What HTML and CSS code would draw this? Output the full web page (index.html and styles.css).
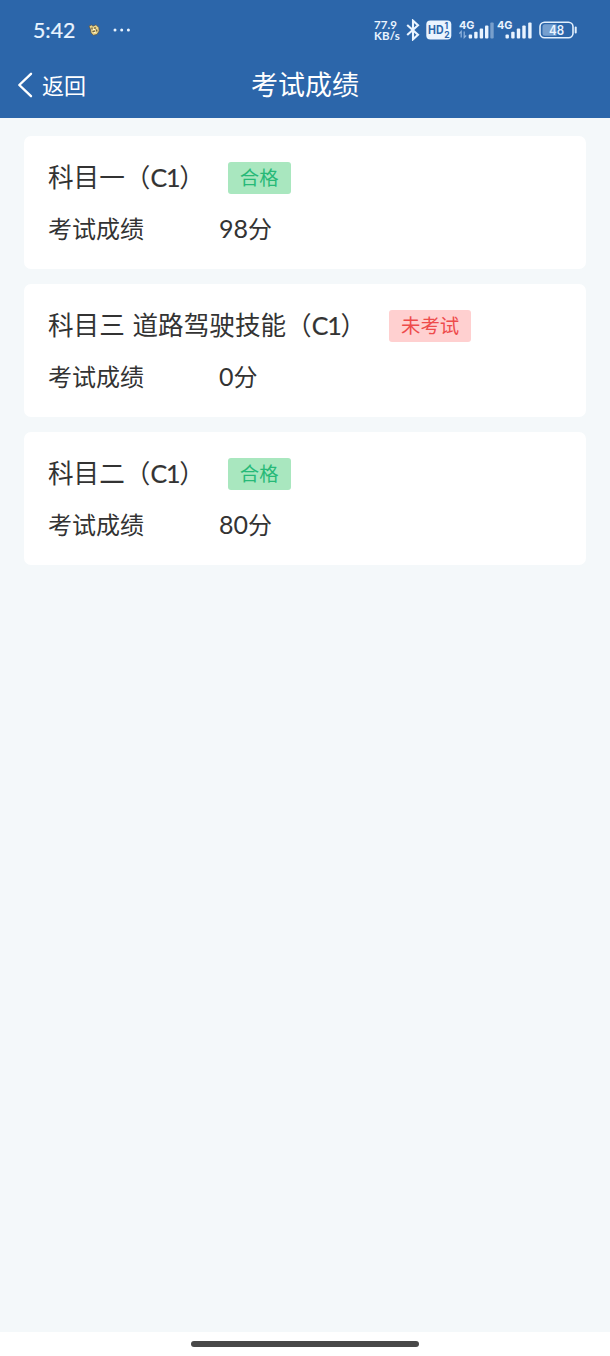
FILE: index.html
```html
<!DOCTYPE html>
<html lang="zh-CN">
<head>
<meta charset="utf-8">
<title>考试成绩</title>
<link rel="stylesheet" href="styles.css">
</head>
<body>
<div class="screen">
  <header class="top">
    <div class="status">
      <span class="clock">5:42</span>
      <svg class="app-icon" width="12" height="12" viewBox="0 0 12 12">
        <path d="M1 2 3.5 1 5 2.2 8 .7 10.8 3.5 11.2 7 9 10.5 5.5 11.2 3 9 2.5 5.5Z" fill="#e9d58b" stroke="#5d5648" stroke-width=".8"/>
        <path d="M4 3.5v2M7 3v2.2M4.5 7.5 7 7M8.5 5.5l.5 2" stroke="#51493b" stroke-width="1.1"/>
        <path d="M5 5.5h2M6 8.5h1.5" stroke="#fff8da" stroke-width="1.2"/>
      </svg>
      <svg class="more" width="18" height="4" viewBox="0 0 18 4" fill="#eaf4ff"><circle cx="2" cy="2" r="1.5"/><circle cx="8.7" cy="2" r="1.5"/><circle cx="15.4" cy="2" r="1.5"/></svg>
      <div class="speed"><span>77.9</span><span>KB/s</span></div>
      <svg class="bluetooth" width="14" height="22" viewBox="0 0 14 22" fill="none" stroke="#eaf4ff" stroke-width="2.1"><path d="M1.2 6 12 15.7 7 20.3V1.7L12 6.3 1.2 16"/></svg>
      <svg class="hd" width="26" height="20" viewBox="0 0 26 20">
        <rect x=".3" y=".5" width="25" height="19" rx="4" fill="#eaf4ff"/>
        <text x="2" y="14.2" font-size="11.5" textLength="15.5" lengthAdjust="spacingAndGlyphs">HD</text>
        <text x="18.5" y="9.3" font-size="8.5">1</text>
        <text x="18.2" y="17.6" font-size="8.5">2</text>
      </svg>
      <svg class="signal one" width="36" height="22" viewBox="0 0 36 22" fill="#eaf4ff">
        <text x="0" y="9.5" font-size="11" textLength="15.5" lengthAdjust="spacingAndGlyphs">4G</text>
        <path d="M2.2 18.5v-6L.3 14.5M5.2 12.5v6l2-2" fill="none" stroke="#91b5df" stroke-width="1.2"/>
        <rect x="9.7" y="15.5" width="3.4" height="4" rx="1"/><rect x="15.2" y="12.8" width="3.4" height="6.7" rx="1"/><rect x="20.7" y="9.5" width="3.4" height="10" rx="1"/><rect x="26" y="6.5" width="3.4" height="13" rx="1"/><rect x="31.3" y="3.5" width="3.4" height="16" rx="1" opacity=".4"/>
      </svg>
      <svg class="signal two" width="36" height="22" viewBox="0 0 36 22" fill="#eaf4ff">
        <text x="0" y="9.5" font-size="11" textLength="15.5" lengthAdjust="spacingAndGlyphs">4G</text>
        <rect x="8.5" y="15.5" width="3.4" height="4" rx="1"/><rect x="14.2" y="12.8" width="3.4" height="6.7" rx="1"/><rect x="19.8" y="9.5" width="3.4" height="10" rx="1"/><rect x="25.3" y="6.5" width="3.4" height="13" rx="1"/><rect x="31.2" y="3.5" width="3.4" height="16" rx="1"/>
      </svg>
      <svg class="battery" width="39" height="18" viewBox="0 0 39 18">
        <path d="M6 3.2h11.5v11.6H6a2.5 2.5 0 0 1-2.5-2.5V5.7A2.5 2.5 0 0 1 6 3.2" fill="#759fcf"/>
        <rect x="1" y="1.2" width="33" height="15.6" rx="4.5" fill="none" stroke="#e2effd" stroke-width="1.6"/>
        <path d="M36.7 6.5v5" stroke="#e2effd" stroke-width="2" stroke-linecap="round"/>
        <text x="10" y="13.6" font-size="12.5" textLength="15" lengthAdjust="spacingAndGlyphs">48</text>
      </svg>
    </div>
    <nav class="nav">
      <a class="back"><svg width="16" height="26" viewBox="0 0 16 26" fill="none" stroke="#fff" stroke-width="2.4" stroke-linecap="round" stroke-linejoin="round"><path d="M14 1.8 2.3 13 14 24.2"/></svg><span>返回</span></a>
      <h1 class="page-title">考试成绩</h1>
    </nav>
  </header>
  <main class="list">
    <section class="card">
      <div class="card-head"><h2 class="subject">科目一（<span class="latin">C1</span>）</h2><span class="badge pass">合格</span></div>
      <div class="score"><span class="label">考试成绩</span><span class="value"><span class="num">98</span>分</span></div>
    </section>
    <section class="card">
      <div class="card-head"><h2 class="subject">科目三 道路驾驶技能（<span class="latin">C1</span>）</h2><span class="badge pending">未考试</span></div>
      <div class="score"><span class="label">考试成绩</span><span class="value"><span class="num">0</span>分</span></div>
    </section>
    <section class="card">
      <div class="card-head"><h2 class="subject">科目二（<span class="latin">C1</span>）</h2><span class="badge pass">合格</span></div>
      <div class="score"><span class="label">考试成绩</span><span class="value"><span class="num">80</span>分</span></div>
    </section>
  </main>
  <footer class="home"><div class="home-bar"></div></footer>
</div>
</body>
</html>
```
FILE: styles.css
```css
* { box-sizing: border-box; }
body { margin: 0; font-family: "Noto Sans CJK SC", sans-serif; color: #333; }
.screen { display: flex; flex-direction: column; width: 610px; height: 1356px; background: #f4f8fa; }
.top { height: 118px; background: #2c66aa; color: #fff; }
.status { display: flex; align-items: center; height: 60px; padding-left: 33px; color: #eaf4ff; }
.status svg { flex: none; }
.status text { font-family: Inter, sans-serif; font-weight: 700; }
.clock { width: 55px; font: 400 21.3px/30px Lato, sans-serif; -webkit-text-stroke: .2px #eaf4ff; }
.more { margin-left: 13px; }
.speed { display: grid; grid-template-rows: 11px 11px; width: 32px; margin-left: 243px; font: 700 11.5px/11px Lato, sans-serif; letter-spacing: .1px; }
.hd { margin-left: 6px; }
.hd text { fill: #2c66aa; }
.signal.one { margin-left: 7px; }
.signal.two { margin-left: 2px; }
.battery { margin-left: 6px; }
.battery text { fill: #eaf4ff; font-weight: 600; }
.nav { display: grid; grid-template-columns: 1fr auto 1fr; align-items: center; height: 50px; }
.back { display: flex; align-items: center; gap: 9px; padding-left: 17px; font-size: 22px; line-height: 32px; }
.back span { padding-bottom: 3px; }
.page-title { margin: 0; padding-bottom: 2px; font-size: 27px; line-height: 38px; font-weight: 400; }
.list { flex: 1; display: flex; flex-direction: column; gap: 15px; padding: 18px 24px; }
.card { height: 133px; padding: 25px 24px 0; border-radius: 7px; background: #fff; }
.card-head { display: flex; align-items: center; height: 33px; gap: 23px; }
.subject { margin: 0; padding-bottom: 2px; font-size: 25.6px; line-height: 32px; font-weight: 400; white-space: nowrap; word-spacing: 2px; }
.latin { font-family: Lato, sans-serif; font-size: 25px; letter-spacing: -1.2px; -webkit-text-stroke: .2px #333; }
.badge { height: 32px; padding: 0 12px; border-radius: 3px; font-size: 19.4px; line-height: 30px; }
.pass { background: #a9e7bf; color: #27b978; }
.pending { background: #ffd0d0; color: #ee4b4b; }
.score { display: flex; margin-top: 17px; font-size: 24px; line-height: 34px; }
.label { width: 171px; }
.num { font-family: Lato, sans-serif; font-size: 25px; }
.home { height: 24px; padding-top: 9px; background: #fff; }
.home-bar { width: 228px; height: 6px; margin: 0 auto; border-radius: 3px; background: #484848; }
```
